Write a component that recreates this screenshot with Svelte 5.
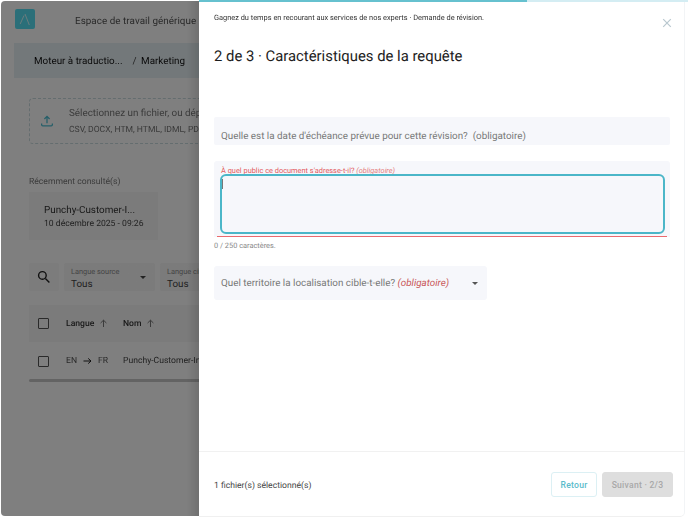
<script>
  const filters = ['Langue source', 'Langue cible'];
</script>

<div class="page">
  <div class="back">
    <header class="top">
      <div class="logo">
        <svg width="20" height="20" viewBox="0 0 20 20"><path d="M5.2 15 L9 6.5" class="lg1"/><path d="M10 5 L14.3 16" class="lg2"/></svg>
      </div>
      <span class="workspace">Espace de travail générique</span>
    </header>
    <nav class="crumbs">
      <span>Moteur à traductio...</span><span class="sep">/</span><span>Marketing</span>
    </nav>
    <main class="panel">
      <div class="drop">
        <svg class="upload" width="14" height="14" viewBox="0 0 14 14"><path d="M7 9.2V2.6M4.4 5 7 2.4 9.6 5" /><path d="M1.6 9.4v1.2c0 .8.5 1.2 1.2 1.2h8.4c.7 0 1.2-.4 1.2-1.2V9.4" /></svg>
        <div class="droptext">
          <div class="d1">Sélectionnez un fichier, ou déposez-le ici</div>
          <div class="d2">CSV, DOCX, HTM, HTML, IDML, PDF, PPTX, XLSX</div>
        </div>
      </div>
      <div class="recent">Récemment consulté(s)</div>
      <div class="card">
        <div class="c1">Punchy-Customer-I...</div>
        <div class="c2">10 décembre 2025 - 09:26</div>
      </div>
      <div class="filters">
        <div class="search">
          <svg width="16" height="16" viewBox="0 0 16 16"><circle cx="6.4" cy="6.4" r="3.8" /><path d="M9.4 9.4 13.4 13.4" /></svg>
        </div>
        {#each filters as f}
          <div class="sel">
            <div class="sl">{f}</div>
            <div class="sv">Tous</div>
            <span class="caret"></span>
          </div>
        {/each}
      </div>
      <div class="thead">
        <span class="cb"></span>
        <span class="th lang">Langue
          <svg class="sort" width="9" height="9" viewBox="0 0 9 9"><path d="M4.5 8V1.2M1.6 4 4.5 1.2 7.4 4" /></svg>
        </span>
        <span class="th">Nom
          <svg class="sort" width="9" height="9" viewBox="0 0 9 9"><path d="M4.5 8V1.2M1.6 4 4.5 1.2 7.4 4" /></svg>
        </span>
      </div>
      <div class="trow">
        <span class="cb"></span>
        <span class="tl">EN
          <svg class="to" width="9" height="8" viewBox="0 0 9 8"><path d="M.5 4H8M5.2 1.4 8 4 5.2 6.6" /></svg>
          FR</span>
        <span class="tn">Punchy-Customer-Insights.docx</span>
      </div>
      <div class="scroll"></div>
    </main>
    <div class="scrim"></div>
  </div>

  <aside class="drawer">
    <div class="progress"><div class="fill"></div></div>
    <div class="dhead">
      <div class="sub">Gagnez du temps en recourant aux services de nos experts · Demande de révision.</div>
      <svg class="close" width="10" height="10" viewBox="0 0 10 10"><path d="M1.2 1.2 8.8 8.8M8.8 1.2 1.2 8.8" /></svg>
    </div>
    <h1>2 de 3 · Caractéristiques de la requête</h1>
    <div class="form">
      <div class="f1">Quelle est la date d'échéance prévue pour cette révision?&nbsp; (obligatoire)</div>
      <div class="f2">
        <div class="f2label">À quel public ce document s'adresse-t-il? <em>(obligatoire)</em></div>
        <div class="ta"><span class="cursor"></span></div>
        <div class="under"></div>
      </div>
      <div class="count">0 / 250 caractères.</div>
      <div class="f3">
        <span>Quel territoire la localisation cible-t-elle? <em>(obligatoire)</em></span>
        <span class="caret dark"></span>
      </div>
    </div>
    <footer class="foot">
      <span class="selcount">1 fichier(s) sélectionné(s)</span>
      <button class="ret">Retour</button>
      <button class="next">Suivant · 2/3</button>
    </footer>
  </aside>
</div>

<style>
  :global(body) { margin: 0; background: #fff; }
  .page {
    width: 688px; height: 517px; display: flex; overflow: hidden;
    font-family: Roboto, "Liberation Sans", sans-serif;
    text-rendering: geometricPrecision;
    filter: blur(0.3px);
  }
  .back {
    position: relative; width: 198px; flex: none; overflow: hidden;
    background: #fff; margin: 1px 0 1px 1px; border-radius: 4px 0 0 4px;
    display: flex; flex-direction: column; color: #222;
    filter: blur(0.45px);
  }
  .scrim {
    position: absolute; inset: 0;
    background: linear-gradient(to right, rgba(0,0,0,.5) 0 186px, rgba(0,0,0,.56) 198px);
  }
  .top { height: 42px; display: flex; align-items: flex-start; padding: 8px 0 0 14px; box-sizing: border-box; flex: none; }
  .logo { width: 20px; height: 20px; border-radius: 2px; background: #56dff2; flex: none; }
  .logo svg { display: block; }
  .lg1, .lg2 { fill: none; stroke: #fff; stroke-width: 1; opacity: .75; }
  .workspace { margin-left: 40px; margin-top: 7px; font-size: 9.85px; letter-spacing: .05px; color: #555; white-space: nowrap; }
  .crumbs {
    margin-left: 13px; height: 35px; flex: none; background: #e7f1f5; display: flex; align-items: center;
    padding: 1px 0 0 20px; width: 400px; font-size: 9.85px; white-space: nowrap; color: #111; box-sizing: border-box;
  }
  .sep { margin: 0 4.5px 0 10px; color: #444; }
  .panel { margin-left: 13px; flex: 1; background: #fefefe; padding: 20px 0 0 15px; width: 400px; box-sizing: border-box; }
  .drop {
    height: 46px; width: 360px; box-sizing: border-box; border: 1px dashed #c9dade; border-radius: 4px;
    display: flex; align-items: center; padding-left: 10px;
  }
  .upload { flex: none; }
  .upload path { fill: none; stroke: #4ebfd3; stroke-width: 1.3; }
  .droptext { margin-left: 15px; white-space: nowrap; }
  .d1 { font-size: 9.85px; color: #777; line-height: 12px; }
  .d2 { font-size: 8.6px; color: #777; margin-top: 5px; line-height: 10px; }
  .recent { margin-top: 31px; font-size: 8.6px; color: #777; line-height: 14px; }
  .card { margin-top: 3px; width: 129px; height: 48px; background: #f7f7f7; box-sizing: border-box; padding: 12px 0 0 15px; white-space: nowrap; }
  .c1 { font-size: 9.85px; color: #333; line-height: 14px; }
  .c2 { font-size: 8.6px; color: #444; line-height: 13px; }
  .filters { margin-top: 23px; display: flex; gap: 5px; height: 28px; }
  .search { width: 30px; flex: none; background: #f8f8f8; display: flex; align-items: center; justify-content: center; border-radius: 2px; }
  .search circle, .search path { fill: none; stroke: #222; stroke-width: 1.4; }
  .sel { position: relative; width: 91px; background: #f7f7f7; padding: 4px 0 0 7px; box-sizing: border-box; border-radius: 2px; flex: none; }
  .sl { font-size: 7.4px; color: #888; line-height: 9px; white-space: nowrap; }
  .sv { font-size: 9.85px; color: #444; line-height: 13px; margin-top: 1.5px; }
  .caret { position: absolute; right: 9px; top: 12.5px; width: 0; height: 0; border: 3.2px solid transparent; border-top: 3.4px solid #444; border-bottom: 0; }
  .thead { margin-top: 14px; height: 37px; background: #f6f6f6; display: flex; align-items: center; padding-left: 9px; }
  .trow { height: 37px; display: flex; align-items: center; padding: 1px 0 0 9px; box-sizing: border-box; }
  .cb { width: 9px; height: 9px; border: 1.3px solid #555; border-radius: 1px; flex: none; }
  .th { font-size: 8.6px; font-weight: 500; color: #333; white-space: nowrap; display: flex; align-items: center; gap: 5px; }
  .sort path { fill: none; stroke: #777; stroke-width: 1; }
  .lang { margin-left: 17px; width: 57px; flex: none; }
  .tl { margin-left: 17px; width: 57px; font-size: 8.6px; color: #555; white-space: nowrap; flex: none; display: flex; align-items: center; gap: 6px; }
  .to path { fill: none; stroke: #222; stroke-width: 1; }
  .tn { font-size: 8.6px; color: #444; white-space: nowrap; }
  .scroll { height: 3px; background: #c7c7c7; border-radius: 2px; width: 380px; }

  .drawer {
    flex: 1; position: relative; display: flex; flex-direction: column; background: #fff;
    margin-right: 3px; border-right: 1px solid #f2f4f6; border-bottom: 1px solid #f0f0f0;
    border-radius: 0 0 5px 0; min-width: 0;
  }
  .progress { height: 2px; background: #d4edf3; margin-right: -4px; flex: none; }
  .fill { width: 328px; height: 2px; background: #66c1cf; }
  .dhead { height: 30px; padding: 11px 0 0 15px; box-sizing: border-box; position: relative; flex: none; }
  .sub { font-size: 7.4px; line-height: 10px; color: #333; white-space: nowrap; }
  .close { position: absolute; top: 16px; right: 12px; }
  .close path { fill: none; stroke: #b9c8cf; stroke-width: 1.2; }
  h1 { margin: 15px 0 0 15px; font-size: 14.85px; line-height: 19px; font-weight: 400; color: #1d1d1d; white-space: nowrap; }
  .form { margin: 51px 0 0 15px; width: 456px; flex: 1; }
  .f1 {
    height: 28px; background: #f6f7fb; border-radius: 2px; box-sizing: border-box; padding: 12.5px 0 0 7px;
    font-size: 9.85px; line-height: 14px; color: #777; white-space: nowrap;
  }
  .f2 { margin-top: 16px; height: 76px; background: #f6f7fb; border-radius: 3px 3px 0 0; position: relative; padding: 0 5.5px; box-sizing: border-box; }
  .f2label { padding: 6px 0 0 1.5px; font-size: 7.4px; line-height: 7px; height: 7px; color: #e35a5e; white-space: nowrap; }
  .f2label em { color: #e58080; }
  .ta { height: 60px; box-sizing: border-box; border: 2px solid #4bb6c8; border-radius: 6px; position: relative; width: 445px; background: #f6f7fb; }
  .cursor { position: absolute; left: 0; top: 3px; width: 1px; height: 10px; background: #777; }
  .under { position: absolute; left: 3px; right: 3px; bottom: 0; height: 1.4px; background: #ea6a6e; }
  .count { margin-top: 4px; font-size: 7.4px; line-height: 9px; color: #888; }
  .f3 {
    position: relative; margin-top: 16px; width: 273px; height: 34px; background: #f6f7fb; border-radius: 3px; padding-left: 7px;
    display: flex; align-items: center; box-sizing: border-box; font-size: 9.85px; color: #777; white-space: nowrap;
  }
  .f3 em { color: #c9585a; }
  .dark { right: 9px; top: 16px; border-top-color: #555; }
  .foot {
    height: 65px; border-top: 1px solid #f1f1f1; display: flex; align-items: center; padding: 1px 12px 0 15px; flex: none; box-sizing: border-box;
    margin-right: -1px; gap: 5px;
  }
  .selcount { font-size: 8.6px; color: #444; margin-right: auto; padding-top: 2px; }
  button { font-family: inherit; height: 25px; box-sizing: border-box; border-radius: 3px; font-size: 8.6px; font-weight: 500; padding: 0; letter-spacing: .25px; }
  .ret { width: 46px; background: #fff; border: 1px solid #dcf0f4; color: #5bbccb; }
  .next { width: 71px; background: #dedede; border: 1px solid #dedede; color: #a8a8a8; }
</style>
